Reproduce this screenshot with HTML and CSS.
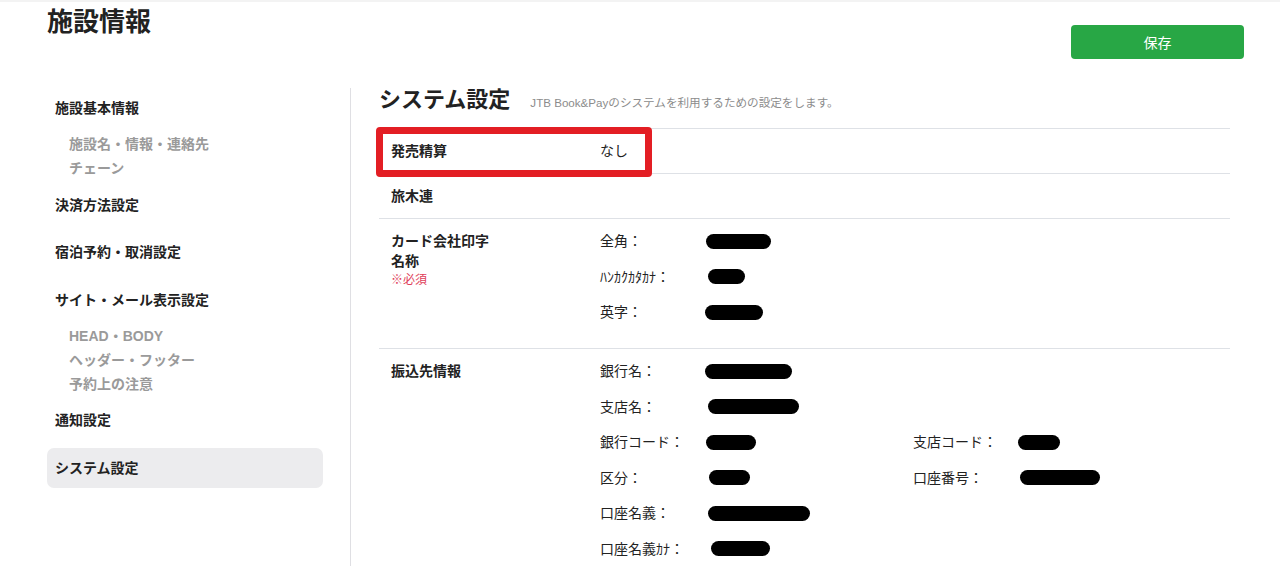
FILE: index.html
```html
<!DOCTYPE html>
<html lang="ja">
<head>
    <meta charset="UTF-8">
    <meta name="viewport" content="width=device-width, initial-scale=1.0">
    <title>施設情報</title>
    <link rel="stylesheet" href="styles.css">
</head>
<body>
    <div class="page">
        <div class="header">
            <h1 class="title">施設情報</h1>
            <button class="save-btn">保存</button>
        </div>

        <div class="layout">
            <div class="sidebar">
                <div class="nav-item">施設基本情報</div>
                <div class="sub-list">
                    <div class="sub-item">施設名・情報・連絡先</div>
                    <div class="sub-item">チェーン</div>
                </div>
                <div class="nav-item">決済方法設定</div>
                <div class="nav-item">宿泊予約・取消設定</div>
                <div class="nav-item">サイト・メール表示設定</div>
                <div class="sub-list">
                    <div class="sub-item">HEAD・BODY</div>
                    <div class="sub-item">ヘッダー・フッター</div>
                    <div class="sub-item">予約上の注意</div>
                </div>
                <div class="nav-item">通知設定</div>
                <div class="nav-item active">システム設定</div>
            </div>

            <div class="main">
                <div class="main-head">
                    <h2 class="main-title">システム設定</h2>
                    <span class="main-desc">JTB Book&amp;Payのシステムを利用するための設定をします。</span>
                </div>

                <div class="table">
                    <div class="highlight"></div>

                    <div class="row">
                        <div class="row-label">発売精算</div>
                        <div class="row-value">なし</div>
                    </div>

                    <div class="row">
                        <div class="row-label">旅木連</div>
                    </div>

                    <div class="row row-tall">
                        <div class="row-label">
                            カード会社印字<br>名称
                            <div class="required">※必須</div>
                        </div>
                        <div class="fields">
                            <span class="f-label">全角：</span>
                            <span class="f-value"><span class="redact" style="width:65px;margin-left:1px"></span></span>
                            <span class="f-label">ﾊﾝｶｸｶﾀｶﾅ：</span>
                            <span class="f-value"><span class="redact" style="width:37px;margin-left:3px"></span></span>
                            <span class="f-label">英字：</span>
                            <span class="f-value"><span class="redact" style="width:58px"></span></span>
                        </div>
                    </div>

                    <div class="row row-tall row-last">
                        <div class="row-label">振込先情報</div>
                        <div class="fields bank">
                            <span class="f-label">銀行名：</span>
                            <span class="f-value wide"><span class="redact" style="width:87px"></span></span>

                            <span class="f-label">支店名：</span>
                            <span class="f-value wide"><span class="redact" style="width:91px;margin-left:3px"></span></span>

                            <span class="f-label">銀行コード：</span>
                            <span class="f-value"><span class="redact" style="width:50px;margin-left:1px"></span></span>
                            <span class="f-label">支店コード：</span>
                            <span class="f-value"><span class="redact" style="width:42px"></span></span>

                            <span class="f-label">区分：</span>
                            <span class="f-value"><span class="redact" style="width:41px;margin-left:4px"></span></span>
                            <span class="f-label">口座番号：</span>
                            <span class="f-value"><span class="redact" style="width:80px;margin-left:2px"></span></span>

                            <span class="f-label">口座名義：</span>
                            <span class="f-value wide"><span class="redact" style="width:102px;margin-left:3px"></span></span>

                            <span class="f-label">口座名義ｶﾅ：</span>
                            <span class="f-value wide"><span class="redact" style="width:59px;margin-left:6px"></span></span>
                        </div>
                    </div>
                </div>
            </div>
        </div>
    </div>
</body>
</html>
```

FILE: styles.css
```css
*{
    box-sizing: border-box;
}
body{
    margin: 0;
    background-color: #fff;
    color: #222;
    font-family: "Liberation Sans", "Noto Sans CJK JP", sans-serif;
    font-size: 14px;
    border-top: 2px solid #f3f3f3;
}
.page{
    padding: 0 36px 0 47px;
}
.header{
    display: flex;
    justify-content: space-between;
    align-items: flex-start;
    height: 86px;
}
.title{
    margin: 0;
    padding-top: 2px;
    font-size: 26px;
    line-height: 36px;
    font-weight: bold;
}
.save-btn{
    margin-top: 23px;
    width: 173px;
    height: 34px;
    border: none;
    border-radius: 4px;
    background-color: #28a745;
    color: #fff;
    font-family: inherit;
    font-size: 14px;
    cursor: pointer;
}

.layout{
    display: flex;
    min-height: 480px;
}
.sidebar{
    width: 304px;
    padding-right: 27px;
    border-right: 1px solid #dfdfe3;
}
.nav-item{
    height: 40px;
    padding: 10px 8px;
    line-height: 20px;
    font-weight: bold;
    border-radius: 7px;
    margin-bottom: 7.5px;
}
.nav-item.active{
    background-color: #ececee;
}
.sub-list{
    margin: -3.5px 0 4.5px;
}
.sub-item{
    padding-left: 22px;
    line-height: 24px;
    font-weight: bold;
    color: #9a9a9a;
}

.main{
    flex: 1;
    padding-left: 28px;
    margin-right: 14px;
}
.main-head{
    display: flex;
    align-items: baseline;
    gap: 20px;
    height: 40px;
}
.main-title{
    margin: 0;
    font-size: 22px;
    line-height: 24px;
    font-weight: bold;
}
.main-desc{
    font-size: 11.6px;
    color: #8c8c8c;
}

.table{
    position: relative;
    border-top: 1px solid #dee1e6;
}
.row{
    display: flex;
    padding: 12px 0;
    border-bottom: 1px solid #dee1e6;
    line-height: 20px;
}
.row-tall{
    padding-bottom: 26px;
}
.row-last{
    border-bottom: none;
}
.row-label{
    width: 221px;
    padding-left: 12px;
    font-weight: bold;
}
.row-value{
    color: #222;
}
.required{
    font-size: 12px;
    line-height: 18px;
    font-weight: normal;
    color: #e0405a;
}
.fields{
    display: grid;
    grid-template-columns: 105px auto;
    row-gap: 15.5px;
    align-items: center;
}
.fields.bank{
    grid-template-columns: 105px 208px 105px auto;
}
.f-value.wide{
    grid-column: span 3;
}
.f-value{
    display: flex;
    align-items: center;
    height: 20px;
}
.redact{
    display: inline-block;
    height: 15px;
    border-radius: 8px;
    background-color: #000;
}

.highlight{
    position: absolute;
    left: -3px;
    top: -2px;
    width: 276px;
    height: 50px;
    border: 7px solid #e31e24;
    border-radius: 4px;
}
```
